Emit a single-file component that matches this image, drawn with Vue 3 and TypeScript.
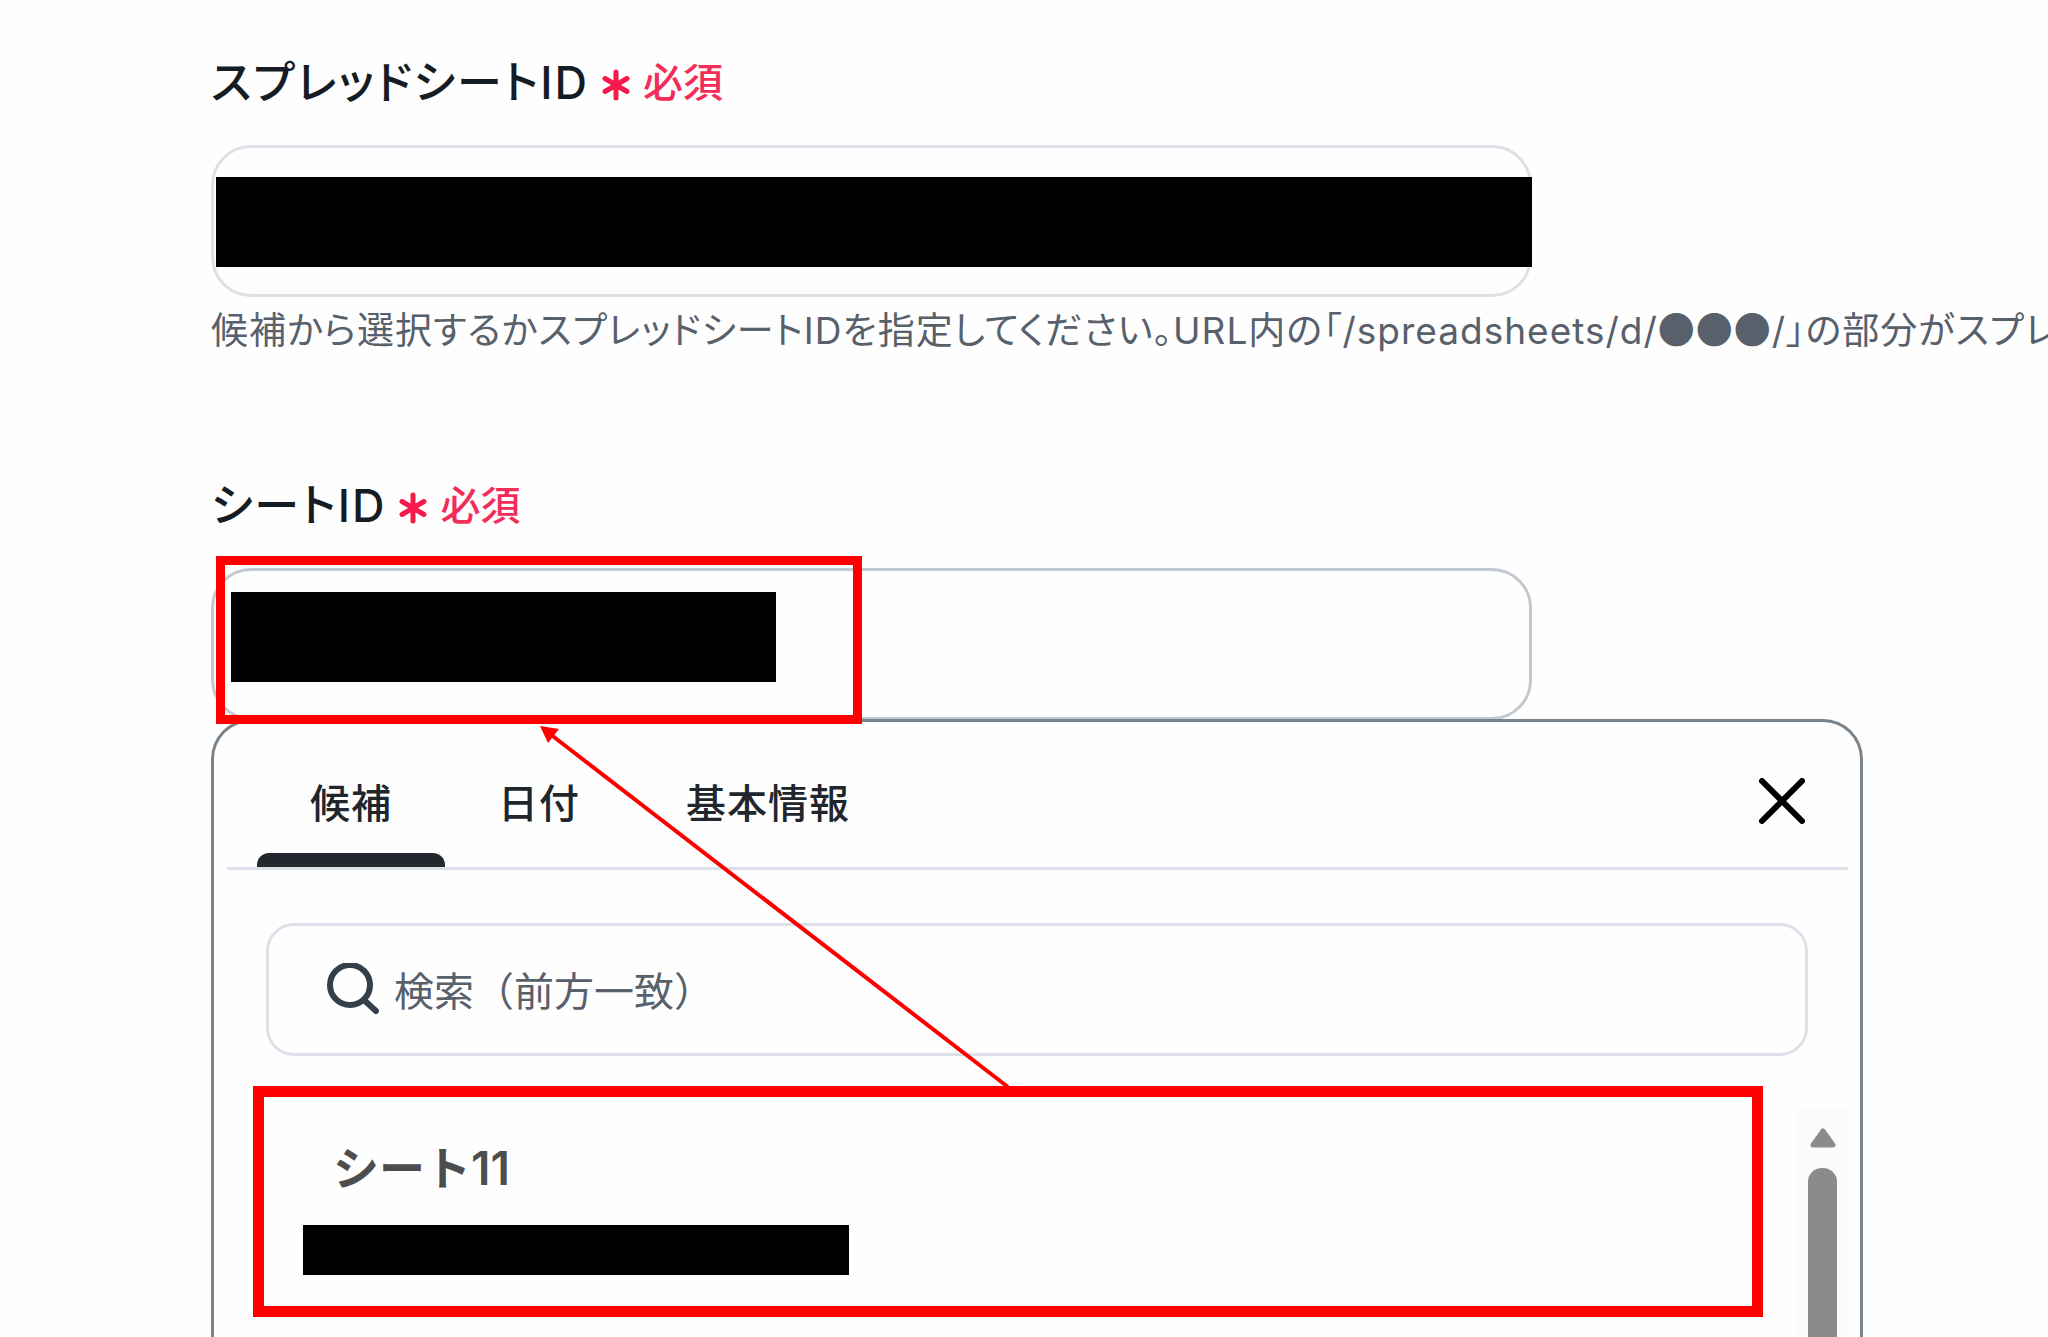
<script setup lang="ts">
import { ref } from 'vue'

const spreadsheetId = ref('')
const sheetId = ref('')
const query = ref('')
const tabs: string[] = ['候補', '日付', '基本情報']
const activeTab = ref(tabs[0])
const candidates: string[] = ['シート11']
</script>

<template>
  <main class="page">
    <section class="field">
      <div class="label-row">
        <label class="label" for="spreadsheet-id">スプレッドシートID</label>
        <span class="required">
          <svg class="asterisk" viewBox="0 0 28 32" aria-hidden="true">
            <path d="M14 3V29M3 9.500L25 22.500M25 9.500L3 22.500" />
          </svg>
          必須
        </span>
      </div>
      <div class="control">
        <input id="spreadsheet-id" v-model="spreadsheetId" class="input" type="text" />
        <span class="mask mask-full"></span>
      </div>
      <p class="help">候補から選択するかスプレッドシートIDを指定してください。URL内の「/spreadsheets/d/<span class="dots">●●●</span>/」の部分がスプレ</p>
    </section>

    <section class="field">
      <div class="label-row">
        <label class="label" for="sheet-id">シートID</label>
        <span class="required">
          <svg class="asterisk" viewBox="0 0 28 32" aria-hidden="true">
            <path d="M14 3V29M3 9.500L25 22.500M25 9.500L3 22.500" />
          </svg>
          必須
        </span>
      </div>
      <div class="control">
        <input id="sheet-id" v-model="sheetId" class="input input-active" type="text" />
        <span class="mask mask-value"></span>
        <span class="frame-field"></span>
      </div>
    </section>

    <section class="panel">
      <header class="panel-head">
        <nav class="tabs">
          <button
            v-for="tab in tabs"
            :key="tab"
            type="button"
            class="tab"
            :class="{ active: tab === activeTab }"
            @click="activeTab = tab"
          >{{ tab }}</button>
        </nav>
        <button type="button" class="close" aria-label="閉じる">
          <svg viewBox="0 0 46 46" aria-hidden="true"><path d="M3 3L43 43M43 3L3 43" /></svg>
        </button>
      </header>

      <label class="search">
        <svg class="search-icon" viewBox="0 0 54 54" aria-hidden="true">
          <circle cx="25" cy="22" r="20" />
          <path d="M39 37L51 48" />
        </svg>
        <input v-model="query" class="search-input" type="text" placeholder="検索（前方一致）" />
      </label>

      <div class="results">
        <ul class="list">
          <li v-for="name in candidates" :key="name">
            <button type="button" class="item">
              <span class="item-name">{{ name }}</span>
              <span class="item-id"></span>
            </button>
          </li>
        </ul>
        <div class="scrollbar" aria-hidden="true">
          <svg class="scroll-up" viewBox="0 0 26 20"><path d="M13 3L23 17H3Z" /></svg>
          <span class="thumb"></span>
        </div>
      </div>

      <svg class="arrow" viewBox="0 0 468 361" aria-hidden="true">
        <path class="shaft" d="M10 8L468 361" />
        <path class="head" d="M0 0L19 3L8 17Z" />
      </svg>
    </section>
  </main>
</template>

<style>
body {
  margin: 0;
  background: #fefefe;
}
</style>

<style scoped>
.page {
  box-sizing: border-box;
  display: flex;
  flex-direction: column;
  height: 100vh;
  padding: 51px 0 0 211px;
  overflow: hidden;
  font-family: Inter, "Noto Sans CJK JP", sans-serif;
  color: #161c24;
}

.page *,
.page *::before,
.page *::after {
  box-sizing: border-box;
}

button,
input {
  font-family: inherit;
  color: inherit;
}

.field + .field {
  margin-top: 115px;
}

.label-row {
  display: flex;
  align-items: center;
  gap: 13px;
  height: 64px;
  margin-bottom: 30px;
}

.label {
  font-size: 45px;
  font-weight: 500;
  line-height: 64px;
  letter-spacing: 2px;
  font-feature-settings: "palt";
}

.required {
  display: flex;
  align-items: center;
  gap: 13px;
  font-size: 40px;
  font-weight: 500;
  line-height: 64px;
  color: #f22d5a;
}

.asterisk {
  width: 28px;
  height: 32px;
  margin-top: 4px;
  fill: none;
  stroke: #f5194c;
  stroke-width: 5;
  stroke-linecap: round;
}

.control {
  position: relative;
  max-width: 1321px;
}

.input {
  display: block;
  width: 100%;
  height: 152px;
  padding: 0 40px;
  border: 3px solid #dce1e7;
  border-radius: 40px;
  outline: none;
  background: #fefefe;
  font-size: 40px;
}

.input-active {
  border-color: #c2c9d0;
}

.mask {
  position: absolute;
  height: 90px;
  background: #000;
}

.mask-full {
  top: 32px;
  left: 5px;
  right: 0;
}

.mask-value {
  top: 24px;
  left: 20px;
  width: 545px;
}

.frame-field {
  position: absolute;
  top: -12px;
  left: 5px;
  z-index: 1;
  width: 646px;
  height: 168px;
  border: 9px solid #f00;
}

.help {
  margin: 6px 0 0;
  font-size: 37px;
  line-height: 56px;
  letter-spacing: 1px;
  white-space: nowrap;
  color: #57606b;
  font-feature-settings: "palt";
}

.dots {
  font-family: "Noto Sans CJK JP", sans-serif;
  line-height: 1;
}

.panel {
  position: relative;
  display: flex;
  flex: 1;
  flex-direction: column;
  margin: -1px 185px 0 0;
  padding: 0 12px 0 13px;
  border: 3px solid #78838c;
  border-bottom: 0;
  border-radius: 40px 40px 0 0;
  background: #fefefe;
}

.panel-head {
  display: flex;
  align-items: center;
  justify-content: space-between;
  height: 148px;
  padding: 0 41px 0 30px;
  border-bottom: 3px solid #dce1e9;
}

.tabs {
  display: flex;
  align-self: stretch;
}

.tab {
  position: relative;
  padding: 18px 53px 0;
  border: 0;
  background: none;
  font-size: 40px;
  font-weight: 500;
  line-height: 56px;
  letter-spacing: 1px;
  color: #20262c;
}

.tab.active::after {
  content: "";
  position: absolute;
  right: 0;
  bottom: 0;
  left: 0;
  height: 14px;
  border-radius: 12px 12px 0 0;
  background: #22282d;
}

.close {
  width: 50px;
  height: 50px;
  margin-top: 12px;
  padding: 2px;
  border: 0;
  background: none;
}

.close svg {
  display: block;
  fill: none;
  stroke: #000;
  stroke-width: 6;
  stroke-linecap: round;
}

.search {
  display: flex;
  align-items: center;
  gap: 15px;
  height: 133px;
  margin: 53px 40px 0 39px;
  padding: 0 56px;
  border: 3px solid #dce1e9;
  border-radius: 28px;
}

.search-icon {
  flex: none;
  width: 54px;
  height: 54px;
  fill: none;
  stroke: #343f4a;
  stroke-width: 6;
  stroke-linecap: round;
}

.search-input {
  flex: 1;
  height: 56px;
  padding: 4px 0 0;
  border: 0;
  outline: none;
  background: none;
  font-size: 40px;
}

.search-input::placeholder {
  color: #57606b;
  opacity: 1;
}

.results {
  display: flex;
  flex: 1;
  justify-content: space-between;
  margin: 30px 1px 0 0;
}

.list {
  flex: 1;
  margin: 0 35px 0 26px;
  padding: 0;
  list-style: none;
}

.item {
  display: flex;
  flex-direction: column;
  width: 100%;
  height: 231px;
  padding: 39px 39px 0;
  border: 11px solid #f00;
  background: none;
  text-align: left;
}

.item-name {
  padding-left: 30px;
  font-size: 46px;
  font-weight: 600;
  line-height: 64px;
  color: #4d4d4d;
}

.item-id {
  width: 546px;
  height: 50px;
  margin-top: 25px;
  background: #000;
}

.scrollbar {
  display: flex;
  flex-direction: column;
  align-items: center;
  width: 49px;
  margin-top: 23px;
  padding-top: 19px;
  background: #fbfbfb;
}

.scroll-up {
  flex: none;
  width: 26px;
  height: 20px;
  fill: #8b8b8b;
  stroke: #8b8b8b;
  stroke-width: 5;
  stroke-linejoin: round;
}

.thumb {
  flex: 1;
  width: 29px;
  margin-top: 20px;
  border-radius: 14px 14px 0 0;
  background: #8b8b8b;
}

.arrow {
  position: absolute;
  top: 2px;
  left: 326px;
  width: 468px;
  height: 365px;
  overflow: visible;
  pointer-events: none;
}

.shaft {
  fill: none;
  stroke: #f00;
  stroke-width: 4;
}

.head {
  fill: #f00;
}
</style>
